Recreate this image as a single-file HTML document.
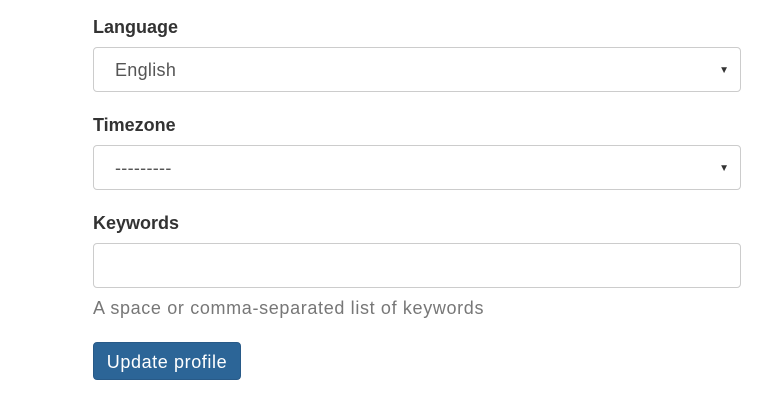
<!DOCTYPE html><html><head><style>
body{margin:0;background:#fff;font-family:"Liberation Sans",sans-serif;width:782px;height:407px;overflow:hidden;position:relative}
.l{position:absolute;left:93px;font-size:18px;font-weight:bold;color:#333}
.b{position:absolute;left:93px;width:646px;height:43px;border:1px solid #ccc;border-radius:4px;box-sizing:content-box}
.t{position:absolute;left:21px;top:12px;font-size:18px;color:#555;letter-spacing:0.3px}
.a{position:absolute;right:11px;top:17px;font-size:10px;color:#333}
</style></head><body>
<div class="l" style="top:17px">Language</div>
<div class="b" style="top:47px"><span class="t">English</span><span class="a">▼</span></div>
<div class="l" style="top:115px">Timezone</div>
<div class="b" style="top:145px"><span class="t">---------</span><span class="a">▼</span></div>
<div class="l" style="top:213px">Keywords</div>
<div class="b" style="top:243px"></div>
<div style="position:absolute;left:93px;top:298px;font-size:18px;color:#777;letter-spacing:0.65px">A space or comma-separated list of keywords</div>
<div style="position:absolute;left:93px;top:342px;width:148px;height:38px;background:#2c6597;border:1px solid #285a88;border-radius:4px;box-sizing:border-box;color:#fff;font-size:18px;line-height:38px;text-align:center;letter-spacing:0.6px">Update profile</div>
</body></html>
